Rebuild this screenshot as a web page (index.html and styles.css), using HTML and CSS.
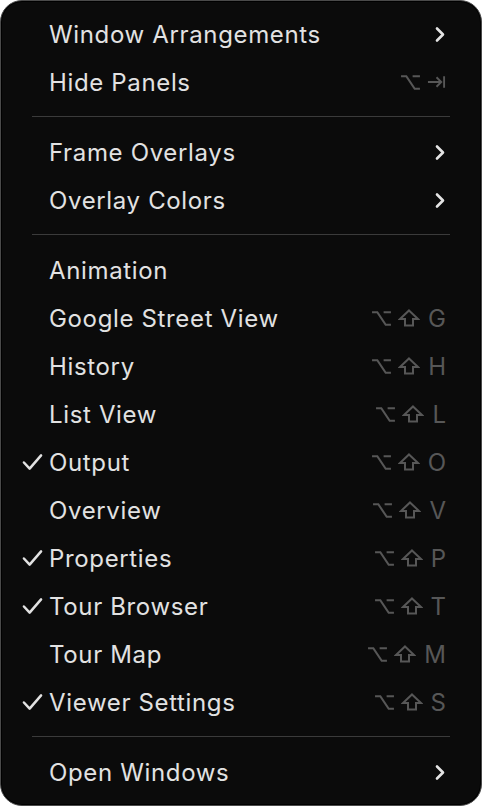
FILE: index.html
```html
<!DOCTYPE html>
<html lang="en">
<head>
    <meta charset="UTF-8">
    <title>Window menu</title>
    <link rel="stylesheet" href="styles.css">
</head>
<body>
    <div class="menu">
        <div class="item"><span class="check"></span><span class="label">Window Arrangements</span><span class="keys"><svg class="chev" viewBox="0 0 10 16"><path d="M2 2l6 6-6 6"/></svg></span></div>
        <div class="item"><span class="check"></span><span class="label">Hide Panels</span><span class="keys"><svg class="opt" viewBox="0 0 20 16"><path d="M1 2h5l8 12h5M12 2h7"/></svg><svg class="tab" viewBox="0 0 20 16"><path d="M1 8h14M10 3l5 5-5 5M18 2v12"/></svg></span></div>
        <div class="sep"></div>
        <div class="item"><span class="check"></span><span class="label">Frame Overlays</span><span class="keys"><svg class="chev" viewBox="0 0 10 16"><path d="M2 2l6 6-6 6"/></svg></span></div>
        <div class="item"><span class="check"></span><span class="label">Overlay Colors</span><span class="keys"><svg class="chev" viewBox="0 0 10 16"><path d="M2 2l6 6-6 6"/></svg></span></div>
        <div class="sep"></div>
        <div class="item"><span class="check"></span><span class="label">Animation</span><span class="keys"></span></div>
        <div class="item"><span class="check"></span><span class="label">Google Street View</span><span class="keys"><svg class="opt" viewBox="0 0 20 16"><path d="M1 2h5l8 12h5M12 2h7"/></svg><svg class="shift" viewBox="0 0 22 18"><path d="M11 1.5l9 8.5h-5v6.5h-8v-6.5h-5z"/></svg><span class="letter">G</span></span></div>
        <div class="item"><span class="check"></span><span class="label">History</span><span class="keys"><svg class="opt" viewBox="0 0 20 16"><path d="M1 2h5l8 12h5M12 2h7"/></svg><svg class="shift" viewBox="0 0 22 18"><path d="M11 1.5l9 8.5h-5v6.5h-8v-6.5h-5z"/></svg><span class="letter">H</span></span></div>
        <div class="item"><span class="check"></span><span class="label">List View</span><span class="keys"><svg class="opt" viewBox="0 0 20 16"><path d="M1 2h5l8 12h5M12 2h7"/></svg><svg class="shift" viewBox="0 0 22 18"><path d="M11 1.5l9 8.5h-5v6.5h-8v-6.5h-5z"/></svg><span class="letter">L</span></span></div>
        <div class="item"><span class="check"><svg viewBox="0 0 22 18"><path d="M2 9.5l6 6.5 12-14"/></svg></span><span class="label">Output</span><span class="keys"><svg class="opt" viewBox="0 0 20 16"><path d="M1 2h5l8 12h5M12 2h7"/></svg><svg class="shift" viewBox="0 0 22 18"><path d="M11 1.5l9 8.5h-5v6.5h-8v-6.5h-5z"/></svg><span class="letter">O</span></span></div>
        <div class="item"><span class="check"></span><span class="label">Overview</span><span class="keys"><svg class="opt" viewBox="0 0 20 16"><path d="M1 2h5l8 12h5M12 2h7"/></svg><svg class="shift" viewBox="0 0 22 18"><path d="M11 1.5l9 8.5h-5v6.5h-8v-6.5h-5z"/></svg><span class="letter">V</span></span></div>
        <div class="item"><span class="check"><svg viewBox="0 0 22 18"><path d="M2 9.5l6 6.5 12-14"/></svg></span><span class="label">Properties</span><span class="keys"><svg class="opt" viewBox="0 0 20 16"><path d="M1 2h5l8 12h5M12 2h7"/></svg><svg class="shift" viewBox="0 0 22 18"><path d="M11 1.5l9 8.5h-5v6.5h-8v-6.5h-5z"/></svg><span class="letter">P</span></span></div>
        <div class="item"><span class="check"><svg viewBox="0 0 22 18"><path d="M2 9.5l6 6.5 12-14"/></svg></span><span class="label">Tour Browser</span><span class="keys"><svg class="opt" viewBox="0 0 20 16"><path d="M1 2h5l8 12h5M12 2h7"/></svg><svg class="shift" viewBox="0 0 22 18"><path d="M11 1.5l9 8.5h-5v6.5h-8v-6.5h-5z"/></svg><span class="letter">T</span></span></div>
        <div class="item"><span class="check"></span><span class="label">Tour Map</span><span class="keys"><svg class="opt" viewBox="0 0 20 16"><path d="M1 2h5l8 12h5M12 2h7"/></svg><svg class="shift" viewBox="0 0 22 18"><path d="M11 1.5l9 8.5h-5v6.5h-8v-6.5h-5z"/></svg><span class="letter">M</span></span></div>
        <div class="item"><span class="check"><svg viewBox="0 0 22 18"><path d="M2 9.5l6 6.5 12-14"/></svg></span><span class="label">Viewer Settings</span><span class="keys"><svg class="opt" viewBox="0 0 20 16"><path d="M1 2h5l8 12h5M12 2h7"/></svg><svg class="shift" viewBox="0 0 22 18"><path d="M11 1.5l9 8.5h-5v6.5h-8v-6.5h-5z"/></svg><span class="letter">S</span></span></div>
        <div class="sep"></div>
        <div class="item"><span class="check"></span><span class="label">Open Windows</span><span class="keys"><svg class="chev" viewBox="0 0 10 16"><path d="M2 2l6 6-6 6"/></svg></span></div>
    </div>
</body>
</html>
```

FILE: styles.css
```css
html, body{
    margin:0;
    background:#ffffff;
}
body{
    font-family:Inter, "Noto Sans", sans-serif;
}
div.menu{
    box-sizing:border-box;
    width:482px;
    height:806px;
    padding-top:9px;
    background:#0b0b0b;
    border:1px solid #4a4a4a;
    border-radius:22px;
    box-shadow:inset 0 0 0 1px #000;
}
div.item{
    display:flex;
    align-items:center;
    height:48px;
    padding-right:35px;
    color:#e2e2e2;
    font-size:24px;
}
span.check{
    display:flex;
    justify-content:flex-end;
    flex:0 0 48px;
}
span.check svg{
    width:21px;
    height:18px;
    margin-right:6px;
    fill:none;
    stroke:#e2e2e2;
    stroke-width:2.6;
    stroke-linecap:round;
    stroke-linejoin:round;
}
span.label{
    flex:1;
    letter-spacing:0.65px;
}
span.keys{
    display:flex;
    align-items:center;
    gap:6px;
    color:#575757;
}
span.keys svg{
    fill:none;
    stroke:#575757;
    stroke-width:2;
}
svg.opt{
    width:21px;
    height:17px;
}
svg.tab{
    width:19px;
    height:16px;
}
svg.shift{
    width:22px;
    height:18px;
}
svg.chev{
    width:10px;
    height:17px;
    margin-right:1px;
}
span.keys svg.chev{
    stroke:#e4e4e4;
    stroke-width:2.6;
    stroke-linecap:round;
    stroke-linejoin:round;
}
span.letter{
    font-size:24px;
    margin-left:2px;
}
div.sep{
    height:1px;
    margin:10px 31px 11px 31px;
    background:#3b3b3b;
}
```
